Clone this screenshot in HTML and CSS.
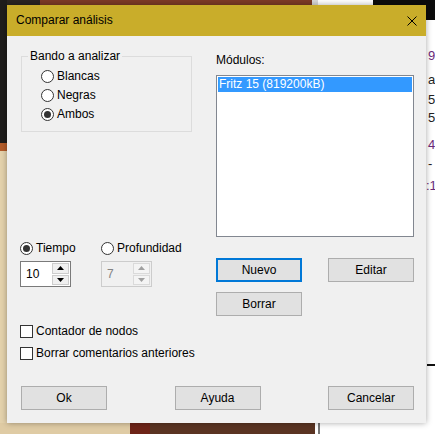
FILE: index.html
```html
<!DOCTYPE html>
<html lang="es">
<head>
    <meta charset="UTF-8">
    <title>Comparar análisis</title>
    <link rel="stylesheet" href="styles.css">
</head>
<body>
    <div class="desktop">
        <!-- Bits of the main window showing around the dialog -->
        <div class="bg bg-topleft"></div>
        <div class="bg bg-board"></div>
        <div class="bg bg-sep"></div>
        <div class="bg bg-black"></div>
        <div class="bg bg-leftdark"></div>
        <div class="bg bg-leftorange"></div>
        <div class="bg bg-leftwood"></div>
        <div class="bg bg-bottomwood"></div>
        <div class="bg bg-bottomred"></div>
        <div class="bg bg-bottombrown"></div>
        <div class="bg bg-bottomsep"></div>
        <div class="bg bg-rightline"></div>
        <div class="notation">
            <span class="n1">9</span>
            <span class="n2">a5</span>
            <span class="n3">5</span>
            <span class="n4">57</span>
            <span class="n5">4</span>
            <span class="n6">-</span>
            <span class="n7">:1</span>
        </div>

        <div class="dialog">
            <div class="titlebar">
                <span class="title">Comparar análisis</span>
                <svg class="close" width="10" height="10" viewBox="0 0 10 10">
                    <path d="M0.5 0.5 L9.5 9.5 M9.5 0.5 L0.5 9.5" stroke="#000" stroke-width="1"/>
                </svg>
            </div>

            <div class="dialog-body">
                <div class="main">
                    <fieldset class="group">
                        <legend>Bando a analizar</legend>
                        <label class="option"><span class="radio"></span>Blancas</label>
                        <label class="option"><span class="radio"></span>Negras</label>
                        <label class="option"><span class="radio checked"></span>Ambos</label>
                    </fieldset>

                    <div class="modules">
                        <div class="caption">Módulos:</div>
                        <div class="listbox">
                            <div class="item selected">Fritz 15 (819200kB)</div>
                        </div>
                    </div>

                    <div class="mode">
                        <div class="mode-row">
                            <label class="option wide"><span class="radio checked"></span>Tiempo</label>
                            <label class="option"><span class="radio"></span>Profundidad</label>
                        </div>
                        <div class="mode-row spins">
                            <div class="spin">
                                <span class="spin-value">10</span>
                                <span class="spin-arrows">
                                    <span class="arrow"><svg width="7" height="4" viewBox="0 0 7 4"><polygon points="3.5,0 7,4 0,4" fill="#000"/></svg></span>
                                    <span class="arrow"><svg width="7" height="4" viewBox="0 0 7 4"><polygon points="0,0 7,0 3.5,4" fill="#000"/></svg></span>
                                </span>
                            </div>
                            <div class="spin disabled">
                                <span class="spin-value">7</span>
                                <span class="spin-arrows">
                                    <span class="arrow"><svg width="7" height="4" viewBox="0 0 7 4"><polygon points="3.5,0 7,4 0,4" fill="#a0a0a0"/></svg></span>
                                    <span class="arrow"><svg width="7" height="4" viewBox="0 0 7 4"><polygon points="0,0 7,0 3.5,4" fill="#a0a0a0"/></svg></span>
                                </span>
                            </div>
                        </div>
                    </div>

                    <div class="engine-buttons">
                        <button class="btn default">Nuevo</button>
                        <button class="btn">Editar</button>
                        <button class="btn">Borrar</button>
                    </div>
                </div>

                <div class="checks">
                    <label class="option"><span class="checkbox"></span>Contador de nodos</label>
                    <label class="option"><span class="checkbox"></span>Borrar comentarios anteriores</label>
                </div>

                <div class="footer">
                    <button class="btn">Ok</button>
                    <button class="btn">Ayuda</button>
                    <button class="btn">Cancelar</button>
                </div>
            </div>
        </div>
    </div>
</body>
</html>
```

FILE: styles.css
```css
body {
    margin: 0;
    font-family: "Liberation Sans", Arial, sans-serif;
    font-size: 12px;
    color: #000;
}
.desktop {
    position: relative;
    width: 435px;
    height: 434px;
    overflow: hidden;
    background: #fff;
}

/* main window behind the dialog */
.bg {
    position: absolute;
}
.bg-topleft { left: 0; top: 0; width: 40px; height: 5px; background: #2a2522; }
.bg-board { left: 40px; top: 0; width: 272px; height: 5px; background: #7d3b26; }
.bg-sep { left: 312px; top: 0; width: 6px; height: 5px; background: #d8d8d8; }
.bg-black { left: 373px; top: 0; width: 62px; height: 20px; background: #0c0c0c; }
.bg-leftdark { left: 0; top: 0; width: 7px; height: 143px; background: #1f1d1c; }
.bg-leftorange { left: 0; top: 143px; width: 7px; height: 8px; background: #b35c2a; }
.bg-leftwood { left: 0; top: 151px; width: 7px; height: 283px; background: #e4d2ac; }
.bg-bottomwood { left: 0; top: 423px; width: 130px; height: 11px; background: #dfcba4; }
.bg-bottomred { left: 130px; top: 423px; width: 20px; height: 11px; background: #6e2418; }
.bg-bottombrown { left: 150px; top: 423px; width: 165px; height: 11px; background: #5a3422; }
.bg-bottomsep { left: 318px; top: 423px; width: 2px; height: 11px; background: #777; }
.bg-rightline { left: 427px; top: 364px; width: 8px; height: 2px; background: #111; }

.notation {
    position: absolute;
    left: 428px;
    top: 0;
    font-family: "Liberation Sans", Arial, sans-serif;
    font-size: 13px;
    color: #6a2a7a;
}
.notation span {
    position: absolute;
    left: 0;
}
.n1 { top: 48px; }
.n2 { top: 72px; color: #222; }
.n3 { top: 92px; color: #222; }
.n4 { top: 110px; color: #222; }
.n5 { top: 137px; }
.n6 { top: 156px; color: #222; }
.n7 { top: 178px; left: -2px !important; }

/* dialog window */
.dialog {
    position: absolute;
    left: 7px;
    top: 5px;
    width: 419px;
    height: 418px;
    background: #f0f0f0;
    box-shadow: 0 0 6px rgba(0, 0, 0, 0.35);
    display: flex;
    flex-direction: column;
}
.titlebar {
    height: 31px;
    flex: none;
    background: #c9ad2a;
    display: flex;
    align-items: center;
    justify-content: space-between;
    padding: 0 9px 0 9px;
}
.title {
    font-size: 12px;
    line-height: 15px;
}
.close {
    display: block;
}
.dialog-body {
    padding: 13px 12px 13px 14px;
}

.main {
    display: grid;
    grid-template-columns: 171px 198px;
    column-gap: 24px;
    align-items: start;
}

/* radios and checkboxes */
.option {
    display: flex;
    align-items: center;
    height: 15px;
    line-height: 15px;
    white-space: nowrap;
}
.radio, .checkbox {
    flex: none;
    width: 11px;
    height: 11px;
    border: 1px solid #333;
    background: #fff;
    margin-right: 3px;
    position: relative;
}
.radio {
    border-radius: 50%;
}
.radio.checked::after {
    content: "";
    position: absolute;
    left: 2px;
    top: 2px;
    width: 7px;
    height: 7px;
    border-radius: 50%;
    background: #333;
}

.group {
    margin: 0;
    height: 83px;
    box-sizing: border-box;
    border: 1px solid #dcdcdc;
    padding: 3px 0 0 19px;
}
.group legend {
    padding: 0 2px;
    margin-left: -13px;
    line-height: 15px;
}
.group .option {
    height: 19px;
}

.caption {
    margin-top: 4px;
    line-height: 15px;
}
.listbox {
    margin-top: 7px;
    height: 162px;
    box-sizing: border-box;
    border: 1px solid #828790;
    background: #fff;
    padding: 1px;
}
.item {
    height: 15px;
    line-height: 15px;
    padding-left: 1px;
}
.item.selected {
    background: #3399ff;
    color: #fff;
}

.mode {
    margin-left: -1px;
}
.mode-row {
    display: flex;
    margin-top: 4px;
}
.mode-row .wide {
    width: 81px;
}
.spins {
    margin-top: 5px;
}
.spin {
    display: flex;
    width: 51px;
    height: 26px;
    box-sizing: border-box;
    border: 1px solid #7a7a7a;
    background: #fff;
    margin-right: 30px;
}
.spin-value {
    flex: 1;
    padding-left: 5px;
    line-height: 24px;
}
.spin-arrows {
    width: 17px;
    display: flex;
    flex-direction: column;
    padding: 1px 1px 1px 0;
    gap: 1px;
}
.arrow {
    flex: 1;
    display: flex;
    align-items: center;
    justify-content: center;
    background: #f0f0f0;
    border: 1px solid #cdcdcd;
}
.spin.disabled {
    border-color: #cccccc;
    background: #f0f0f0;
    color: #838383;
}
.spin.disabled .arrow {
    background: #f4f4f4;
    border-color: #dadada;
}

.engine-buttons {
    margin-top: 21px;
    display: grid;
    grid-template-columns: 86px 86px;
    justify-content: space-between;
    row-gap: 10px;
}

.btn {
    width: 86px;
    height: 24px;
    box-sizing: border-box;
    border: 1px solid #adadad;
    background: #e1e1e1;
    font-family: inherit;
    font-size: 12px;
    color: #000;
    padding: 0;
}
.btn.default {
    border: 2px solid #0078d7;
}

.checks {
    margin-top: 8px;
    margin-left: -1px;
    display: flex;
    flex-direction: column;
    gap: 7px;
}

.footer {
    margin-top: 25px;
    display: flex;
    justify-content: space-between;
}
```
